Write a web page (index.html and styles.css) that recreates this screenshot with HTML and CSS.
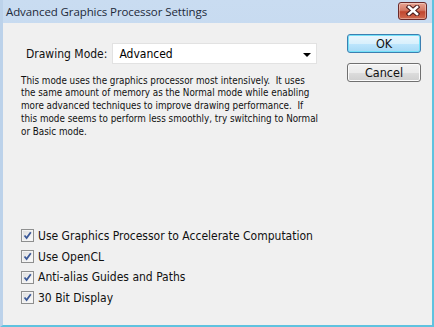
FILE: index.html
```html
<!DOCTYPE html>
<html lang="en">
<head>
    <title>Advanced Graphics Processor Settings</title>
    <link rel="stylesheet" href="styles.css">
</head>
<body>
    <div class="window">
        <!-- Title Bar -->
        <div class="titlebar">
            <span class="title">Advanced Graphics Processor Settings</span>
            <button class="close-btn" aria-label="Close">
                <svg width="14" height="11" viewBox="0 0 14 11">
                    <path d="M3 2 L11 9 M11 2 L3 9" stroke="#4a1a1a" stroke-width="4.6" stroke-linecap="square" fill="none"/>
                    <path d="M3 2 L11 9 M11 2 L3 9" stroke="#fff" stroke-width="2.6" stroke-linecap="square" fill="none"/>
                </svg>
            </button>
        </div>

        <!-- Dialog Body -->
        <div class="client">
            <div class="main">
                <div class="mode-row">
                    <label class="mode-label">Drawing Mode:</label>
                    <div class="select">
                        <span>Advanced</span>
                        <span class="arrow"></span>
                    </div>
                </div>
                <p class="desc">
                    This mode uses the graphics processor most intensively.&nbsp; It uses<br>
                    the same amount of memory as the Normal mode while enabling<br>
                    more advanced techniques to improve drawing performance.&nbsp; If<br>
                    this mode seems to perform less smoothly, try switching to Normal<br>
                    or Basic mode.
                </p>
                <div class="options">
                    <div class="option"><span class="check"><svg width="9" height="9" viewBox="0 0 9 9"><path d="M1.5 4.5 L3.6 7 L7.8 1.2" stroke="#3b5998" stroke-width="1.8" fill="none"/></svg></span>Use Graphics Processor to Accelerate Computation</div>
                    <div class="option"><span class="check"><svg width="9" height="9" viewBox="0 0 9 9"><path d="M1.5 4.5 L3.6 7 L7.8 1.2" stroke="#3b5998" stroke-width="1.8" fill="none"/></svg></span>Use OpenCL</div>
                    <div class="option"><span class="check"><svg width="9" height="9" viewBox="0 0 9 9"><path d="M1.5 4.5 L3.6 7 L7.8 1.2" stroke="#3b5998" stroke-width="1.8" fill="none"/></svg></span>Anti-alias Guides and Paths</div>
                    <div class="option"><span class="check"><svg width="9" height="9" viewBox="0 0 9 9"><path d="M1.5 4.5 L3.6 7 L7.8 1.2" stroke="#3b5998" stroke-width="1.8" fill="none"/></svg></span>30 Bit Display</div>
                </div>
            </div>

            <div class="buttons">
                <button class="btn btn-default">OK</button>
                <button class="btn">Cancel</button>
            </div>
        </div>
    </div>
</body>
</html>
```

FILE: styles.css
```css
/* Global Styles */
* {
    margin: 0;
    padding: 0;
    box-sizing: border-box;
}

body {
    font-family: "DejaVu Sans Condensed", "DejaVu Sans", sans-serif;
    background-color: #fff;
    color: #000;
}

.window {
    width: 434px;
    height: 327px;
    display: flex;
    flex-direction: column;
    background: linear-gradient(#c9dcf1, #b8cfe8);
    border-left: 3px solid #bcd2ea;
    border-right: 2px solid #5fc2df;
    border-bottom: 2px solid #5fc2df;
}

/* Title Bar */
.titlebar {
    height: 23px;
    display: flex;
    align-items: center;
    justify-content: space-between;
    padding: 0 5px 0 3px;
}

.title {
    font-family: "Open Sans", sans-serif;
    font-size: 11.5px;
    color: #1e2a3a;
    letter-spacing: -0.1px;
}

.close-btn {
    width: 29px;
    height: 18px;
    margin-top: -2px;
    border: 1px solid #6b2a2a;
    border-radius: 3px;
    background: linear-gradient(#e8a493 0%, #d47a66 45%, #c0462f 55%, #d06a50 100%);
    display: flex;
    align-items: center;
    justify-content: center;
    box-shadow: inset 0 0 0 1px rgba(255, 255, 255, 0.35);
}

/* Dialog Body */
.client {
    flex: 1;
    display: flex;
    background-color: #f0f0f0;
}

.main {
    flex: 1;
    display: flex;
    flex-direction: column;
    padding: 20px 0 17px 18px;
}

.mode-row {
    display: flex;
    align-items: center;
    margin-left: 5px;
    gap: 5px;
}

.mode-label {
    font-size: 12px;
    color: #111;
}

.select {
    width: 205px;
    height: 21px;
    background-color: #fff;
    border: 1px solid #e2e2e2;
    display: flex;
    align-items: center;
    justify-content: space-between;
    padding: 0 5px 0 6px;
    font-size: 12px;
}

.arrow {
    width: 0;
    height: 0;
    border-left: 4px solid transparent;
    border-right: 4px solid transparent;
    border-top: 4px solid #000;
    margin-top: 2px;
}

.desc {
    margin-top: 10.5px;
    font-size: 9.8px;
    line-height: 12.75px;
    color: #111;
}

/* Checkbox List */
.options {
    margin-top: auto;
}

.option {
    display: flex;
    align-items: center;
    gap: 4px;
    height: 20.6px;
    font-size: 12px;
    color: #111;
}

.check {
    width: 13px;
    height: 13px;
    border: 1px solid #8e8f8f;
    background: linear-gradient(135deg, #dcdcdc, #fdfdfd);
    display: flex;
    align-items: center;
    justify-content: center;
    box-shadow: inset 0 0 0 1px #f4f4f4;
}

/* Buttons */
.buttons {
    width: 85px;
    display: flex;
    flex-direction: column;
    gap: 10px;
    padding-top: 11px;
}

.btn {
    width: 74px;
    height: 19px;
    font-family: "DejaVu Sans Condensed", "DejaVu Sans", sans-serif;
    font-size: 12.5px;
    color: #111;
    border: 1px solid #707070;
    border-radius: 3px;
    background: linear-gradient(#f2f2f2 0%, #ebebeb 50%, #dddddd 51%, #cfcfcf 100%);
    box-shadow: inset 0 0 0 1px #fbfbfb;
}

.btn-default {
    border-color: #3c7fb1;
    background: linear-gradient(#eaf6fd 0%, #d9f0fc 50%, #bee6fd 51%, #a7d9f5 100%);
    box-shadow: inset 0 0 0 1px #74e1f8;
}
```
